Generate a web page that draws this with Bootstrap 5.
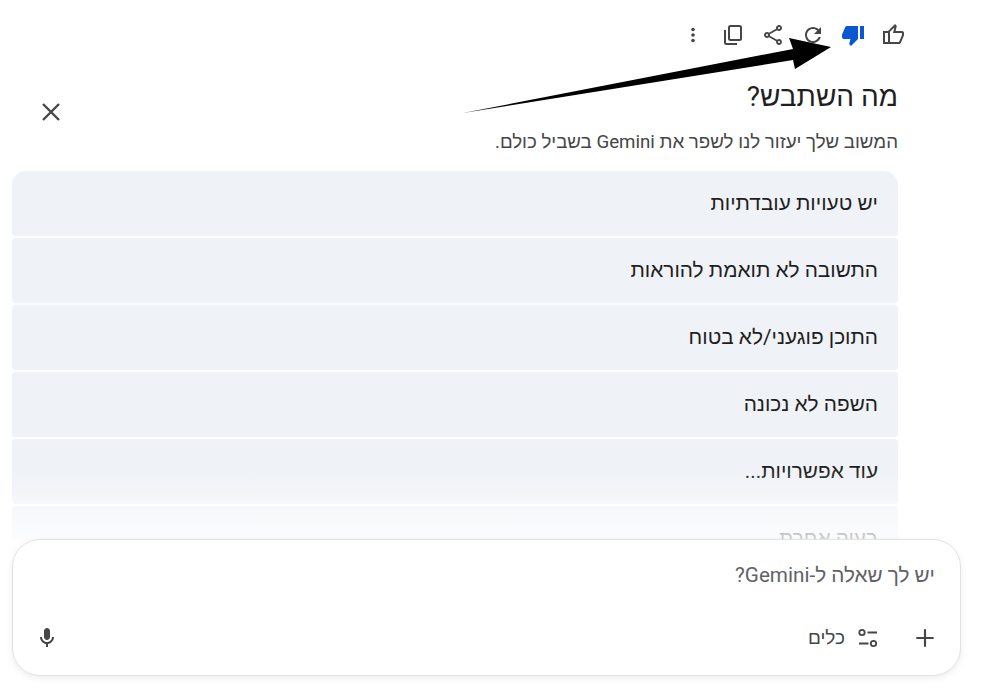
<!DOCTYPE html>
<html lang="he" dir="rtl">
<head>
    <meta charset="UTF-8">
    <meta name="viewport" content="width=device-width, initial-scale=1.0">
    <title>Gemini feedback</title>
    <link href="https://cdn.jsdelivr.net/npm/bootstrap@5.3.0/dist/css/bootstrap.min.css" rel="stylesheet">
    <script src="https://cdn.jsdelivr.net/npm/bootstrap@5.3.0/dist/js/bootstrap.bundle.min.js"></script>
    <style>
        html, body { height: 100%; overflow: hidden; background: #fff; }
        body { font-family: Roboto, "Liberation Sans", sans-serif; color: #1f1f1f; }
        .page-wrap { position: relative; width: 999px; height: 688px; overflow: hidden; }

        .tool-row { height: 40px; margin-top: 15px; padding-right: 86px; }
        .tool-btn { width: 40px; height: 40px; padding: 0; border: 0; background: none; color: #444746; }
        .tool-btn svg { display: block; margin: auto; fill: currentColor; }
        .tool-btn.is-on { color: #0b57d0; }

        .panel { padding: 0 101px 0 12px; }
        .panel-head { margin-top: 23px; height: 93px; }
        .panel-title { font-size: 28px; font-weight: 400; line-height: 38px; margin: 0 0 13px; }
        .panel-sub { font-size: 18.7px; line-height: 26px; color: #444746; margin: 0; }
        .close-btn { width: 40px; height: 40px; margin: 14px 0 0 19px; padding: 0; border: 0; background: none; color: #444746; }
        .close-btn svg { display: block; margin: auto; }

        .option-box { position: relative; height: 368px; overflow: hidden; }
        .option-box::after { content: ""; position: absolute; left: 0; right: 0; bottom: 0; height: 70px;
            background: linear-gradient(rgba(255,255,255,0), rgba(255,255,255,.8)); }
        .option-list { gap: 2px; }
        .option-item { height: 65px; flex: none; padding: 0 20px; display: flex; align-items: center; font-size: 20.8px;
            color: #1f1f1f; background: #eff2f7; border-radius: 4px; }
        .option-item:first-child { border-top-left-radius: 14px; border-top-right-radius: 14px; }

        .composer { width: 949px; height: 137px; margin-right: 38px; background: #fff; border: 1px solid #e1e3e1;
            border-radius: 28px; box-shadow: 0 2px 8px -2px rgba(0,0,0,.12); position: relative; }
        .composer-ph { padding: 21px 25px 0 0; font-size: 20.7px; line-height: 28px; color: #5f6368; height: 72px; }
        .composer-bar { padding: 0 15px 0 14px; height: 40px; margin-top: 6px; }
        .comp-btn { height: 40px; min-width: 40px; padding: 0; border: 0; background: none; color: #444746; font-size: 19px; }
        .comp-btn svg { fill: currentColor; display: block; }
        .comp-btn svg.line-icon { fill: none; stroke: currentColor; stroke-width: 1.8; }
        .tools-btn { margin-right: 25px; gap: 11px; }

        .arrow-mark { position: absolute; left: 0; top: 0; pointer-events: none; }
    </style>
</head>
<body>
<div class="page-wrap">
    <!-- feedback icons, first one on the right because of rtl -->
    <div class="tool-row d-flex">
        <button class="tool-btn" aria-label="like">
            <svg width="24" height="24" viewBox="0 -960 960 960"><path d="M720-120H280v-520l280-280 50 50q7 7 11.500 19t4.500 23v14l-44 174h258q32 0 56 24t24 56v80q0 7-2 15t-4 15L794-168q-9 20-30 34t-44 14Zm-360-80h360l120-280v-80H480l54-220-174 174v406Zm-80-440v80H160v360h120v80H80v-520h200Z"/></svg>
        </button>
        <button class="tool-btn is-on" aria-label="dislike">
            <svg width="24" height="24" viewBox="0 -960 960 960"><path d="M240-840h440v520L400-40l-50-50q-7-7-11.500-19t-4.500-23v-14l44-174H120q-32 0-56-24t-24-56v-80q0-7 2-15t4-15l120-282q9-20 30-34t44-14Zm520 520v-520h160v520H760Z"/></svg>
        </button>
        <button class="tool-btn" aria-label="redo">
            <svg width="24" height="24" viewBox="0 0 24 24"><path d="M17.650 6.350C16.200 4.900 14.210 4 12 4c-4.420 0-7.990 3.580-7.990 8s3.570 8 7.990 8c3.730 0 6.840-2.550 7.730-6h-2.080c-.82 2.330-3.040 4-5.650 4-3.310 0-6-2.690-6-6s2.690-6 6-6c1.660 0 3.140.69 4.220 1.780L13 11h7V4l-2.350 2.350z"/></svg>
        </button>
        <button class="tool-btn" aria-label="share">
            <svg width="24" height="24" viewBox="0 0 24 24"><path d="M18 16.080c-.76 0-1.440.3-1.960.77L8.910 12.700c.05-.23.09-.46.09-.7s-.04-.47-.09-.7l7.050-4.110c.54.5 1.250.81 2.040.81 1.660 0 3-1.340 3-3s-1.340-3-3-3-3 1.340-3 3c0 .24.04.47.09.7L8.040 9.810C7.500 9.310 6.790 9 6 9c-1.660 0-3 1.340-3 3s1.340 3 3 3c.79 0 1.500-.31 2.040-.81l7.120 4.160c-.05.21-.08.43-.08.65 0 1.610 1.310 2.920 2.920 2.920 1.610 0 2.920-1.310 2.920-2.920s-1.310-2.920-2.920-2.920zM18 4c.55 0 1 .45 1 1s-.45 1-1 1-1-.45-1-1 .45-1 1-1zM6 13c-.55 0-1-.45-1-1s.45-1 1-1 1 .45 1 1-.45 1-1 1zm12 7.020c-.55 0-1-.45-1-1s.45-1 1-1 1 .45 1 1-.45 1-1 1z"/></svg>
        </button>
        <button class="tool-btn" aria-label="copy">
            <svg width="24" height="24" viewBox="0 0 24 24"><path fill-rule="evenodd" d="M9.500 2h9A2.500 2.500 0 0 1 21 4.500v11a2.500 2.500 0 0 1-2.500 2.500h-9A2.500 2.500 0 0 1 7 15.500v-11A2.500 2.500 0 0 1 9.500 2zm0 2a.5.5 0 0 0-.5.5v11a.5.500 0 0 0 .5.5h9a.5.5 0 0 0 .5-.5v-11a.5.5 0 0 0-.5-.5z"/><path d="M3 7h2v12.500a.5.5 0 0 0 .5.5H16v2H5.500A2.500 2.500 0 0 1 3 19.500z"/></svg>
        </button>
        <button class="tool-btn" aria-label="more">
            <svg width="24" height="24" viewBox="0 0 24 24"><circle cx="12" cy="6.500" r="1.800"/><circle cx="12" cy="12" r="1.800"/><circle cx="12" cy="17.500" r="1.800"/></svg>
        </button>
    </div>

    <div class="panel">
        <div class="panel-head d-flex justify-content-between align-items-start">
            <div>
                <h2 class="panel-title">מה השתבש?</h2>
                <p class="panel-sub">המשוב שלך יעזור לנו לשפר את Gemini בשביל כולם.</p>
            </div>
            <button class="close-btn" aria-label="close">
                <svg width="24" height="24" viewBox="0 0 24 24" fill="none" stroke="currentColor" stroke-width="2.400"><path d="M4 4l16 16M20 4L4 20"/></svg>
            </button>
        </div>

        <div class="option-box">
            <div class="option-list d-flex flex-column">
                <div class="option-item">יש טעויות עובדתיות</div>
                <div class="option-item">התשובה לא תואמת להוראות</div>
                <div class="option-item">התוכן פוגעני/לא בטוח</div>
                <div class="option-item">השפה לא נכונה</div>
                <div class="option-item">עוד אפשרויות...</div>
                <div class="option-item">בעיה אחרת</div>
            </div>
        </div>
    </div>

    <div class="composer">
        <div class="composer-ph">יש לך שאלה ל-Gemini?</div>
        <div class="composer-bar d-flex align-items-center">
            <button class="comp-btn d-flex align-items-center justify-content-center" aria-label="add">
                <svg width="26" height="26" viewBox="0 0 24 24"><path d="M11 4h2v7h7v2h-7v7h-2v-7H4v-2h7z"/></svg>
            </button>
            <button class="comp-btn d-flex align-items-center tools-btn">
                <svg class="line-icon" width="24" height="24" viewBox="0 0 24 24"><circle cx="6" cy="6.500" r="2.700"/><circle cx="17.500" cy="17.500" r="2.700"/><path d="M11.500 6.500H21M3 17.500h9.500"/></svg>
                <span>כלים</span>
            </button>
            <button class="comp-btn d-flex align-items-center justify-content-center me-auto" aria-label="mic">
                <svg width="24" height="24" viewBox="0 0 24 24"><path d="M12 14c1.660 0 3-1.340 3-3V5c0-1.660-1.340-3-3-3S9 3.340 9 5v6c0 1.660 1.340 3 3 3z"/><path d="M17 11c0 2.760-2.240 5-5 5s-5-2.240-5-5H5c0 3.530 2.610 6.430 6 6.920V21h2v-3.080c3.390-.49 6-3.390 6-6.920h-2z"/></svg>
            </button>
        </div>
    </div>

    <!-- annotation arrow drawn over the screenshot -->
    <svg class="arrow-mark" width="999" height="688" viewBox="0 0 999 688">
        <polygon points="463,113 793,49 789,38 831,47 795,69 793,60" fill="#000"/>
    </svg>
</div>
</body>
</html>
